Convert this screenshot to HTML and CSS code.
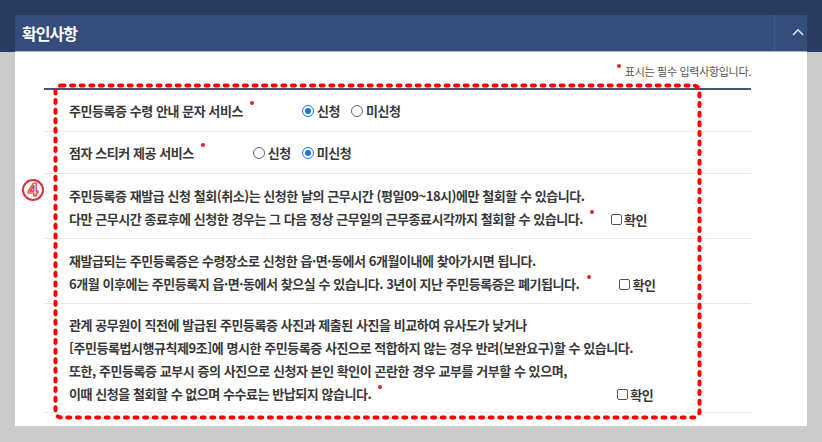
FILE: index.html
```html
<!DOCTYPE html>
<html lang="ko">
<head>
<meta charset="utf-8">
<title>확인사항</title>
<link rel="stylesheet" href="styles.css">
</head>
<body>
<div class="screen">
  <section class="panel">
    <header class="panel-head">
      <h2 class="panel-title">확인사항</h2>
      <span class="toggle">
        <svg width="12" height="8" viewBox="0 0 12 8"><path d="M1 7 L6 1.8 L11 7" fill="none" stroke="#e4e8ef" stroke-width="1.6"/></svg>
      </span>
    </header>
    <div class="panel-body">
      <p class="notice"><span class="req req-notice"></span>표시는 필수 입력사항입니다.</p>
      <div class="table">
        <div class="row row-choice">
          <span class="label">주민등록증 수령 안내 문자 서비스</span><span class="req"></span>
          <span class="choices">
            <span class="opt"><span class="radio is-on"></span>신청</span>
            <span class="opt"><span class="radio"></span>미신청</span>
          </span>
        </div>
        <div class="row row-choice">
          <span class="label">점자 스티커 제공 서비스</span><span class="req"></span>
          <span class="choices">
            <span class="opt"><span class="radio"></span>신청</span>
            <span class="opt"><span class="radio is-on"></span>미신청</span>
          </span>
        </div>
        <div class="row row-text">
          <p class="text">주민등록증 재발급 신청 철회(취소)는 신청한 날의 근무시간 (평일09~18시)에만 철회할 수 있습니다.<br>다만 근무시간 종료후에 신청한 경우는 그 다음 정상 근무일의 근무종료시각까지 철회할 수 있습니다.<span class="req"></span><span class="check check-a"><span class="box"></span>확인</span></p>
        </div>
        <div class="row row-text">
          <p class="text">재발급되는 주민등록증은 수령장소로 신청한 읍·면·동에서 6개월이내에 찾아가시면 됩니다.<br>6개월 이후에는 주민등록지 읍·면·동에서 찾으실 수 있습니다. 3년이 지난 주민등록증은 폐기됩니다.<span class="req req-wide"></span><span class="check check-b"><span class="box"></span>확인</span></p>
        </div>
        <div class="row row-text row-last">
          <p class="text">관계 공무원이 직전에 발급된 주민등록증 사진과 제출된 사진을 비교하여 유사도가 낮거나<br>[주민등록법시행규칙제9조]에 명시한 주민등록증 사진으로 적합하지 않는 경우 반려(보완요구)할 수 있습니다.<br>또한, 주민등록증 교부시 증의 사진으로 신청자 본인 확인이 곤란한 경우 교부를 거부할 수 있으며,<br>이때 신청을 철회할 수 없으며 수수료는 반납되지 않습니다.<span class="req"></span><span class="check check-c"><span class="box"></span>확인</span></p>
        </div>
      </div>
    </div>
  </section>
  <svg class="annot-box" width="650" height="338" viewBox="0 0 650 338">
    <rect x="2.5" y="2.5" width="644" height="332" rx="6" fill="none" stroke="#ff0000" stroke-width="4" stroke-dasharray="3 6.6" stroke-linecap="round"/>
  </svg>
  <span class="annot-num">4</span>
</div>
</body>
</html>
```
FILE: styles.css
```css
* { box-sizing: border-box; }
html, body { margin: 0; padding: 0; }
body {
  font-family: "Noto Sans CJK KR", "Noto Sans", sans-serif;
  color: #333;
}
.screen {
  position: relative;
  width: 822px;
  height: 442px;
  padding: 15px 15px 16px 15px;
  background: linear-gradient(to bottom, #2a3c62 0, #2a3c62 52px, #cbcbcb 52px);
  overflow: hidden;
}
.panel {
  display: flex;
  flex-direction: column;
  height: 411px;
}
.panel-head {
  display: flex;
  align-items: center;
  height: 37px;
  background: #344d7b;
  border-bottom: 1px solid #aab2c4;
}
.panel-title {
  flex: 1;
  margin: 0;
  padding-left: 7px;
  font-size: 16px;
  font-weight: 700;
  letter-spacing: -1px;
  color: #ffffff;
  line-height: 20px;
}
.toggle {
  display: flex;
  justify-content: flex-end;
  align-items: center;
  width: 33px;
  height: 36px;
  padding-right: 3px;
  padding-bottom: 3px;
  border-left: 1px solid rgba(255,255,255,0.07);
}
.panel-body {
  flex: 1;
  background: #ffffff;
  padding: 11px 56px 0 29px;
}
.notice {
  margin: 0 0 9px;
  text-align: right;
  font-size: 11px;
  line-height: 16px;
  letter-spacing: -0.3px;
  color: #555;
}
.req {
  display: inline-block;
  width: 4px;
  height: 4px;
  border-radius: 50%;
  background: #e8202a;
  vertical-align: 0.75em;
  margin-left: 7px;
}
.req-wide { margin-left: 8px; }
.req-notice { margin: 0 4px 0 0; vertical-align: 0.7em; }
.table {
  border-top: 2px solid #45557a;
}
.row {
  border-bottom: 1px solid #e8e8e8;
  padding-left: 25px;
  font-size: 13px;
  font-weight: 700;
  letter-spacing: -0.45px;
  color: #383838;
}
.row-choice {
  display: flex;
  align-items: center;
  height: 42px;
}
.row-choice .req { align-self: flex-start; margin-top: 11px; }
.choices {
  display: flex;
  align-items: center;
  margin-left: 48px;
  gap: 11px;
}
.opt {
  display: inline-flex;
  align-items: center;
  gap: 3px;
}
.radio {
  display: inline-block;
  width: 12px;
  height: 12px;
  border: 1px solid #666;
  border-radius: 50%;
  background: #fff;
  position: relative;
}
.radio.is-on {
  border-color: #1a73e8;
}
.radio.is-on::after {
  content: "";
  position: absolute;
  left: 2px;
  top: 2px;
  width: 6px;
  height: 6px;
  border-radius: 50%;
  background: #1a73e8;
}
.row-text {
  padding-top: 10px;
  padding-bottom: 7px;
}
.row-last {
  padding-top: 9px;
  padding-bottom: 6px;
}
.text {
  margin: 0;
  line-height: 23px;
}
.check {
  display: inline-flex;
  align-items: center;
  gap: 2px;
  vertical-align: -1px;
}
.check-a { margin-left: 17px; }
.check-b { margin-left: 28px; }
.check-c { margin-left: 235px; }
.box {
  display: inline-block;
  width: 11px;
  height: 11px;
  border: 1px solid #555;
  border-radius: 2px;
  background: #fff;
}
.annot-box {
  position: absolute;
  left: 53px;
  top: 83px;
}
.annot-num {
  position: absolute;
  left: 22px;
  top: 179px;
  width: 22px;
  height: 22px;
  border: 2px solid #d83434;
  border-radius: 50%;
  display: flex;
  align-items: center;
  justify-content: center;
  font-family: "Liberation Sans", sans-serif;
  font-size: 18px;
  font-weight: 700;
  color: #fff;
  -webkit-text-stroke: 1.2px #d83434;
  line-height: 1;
}
```
